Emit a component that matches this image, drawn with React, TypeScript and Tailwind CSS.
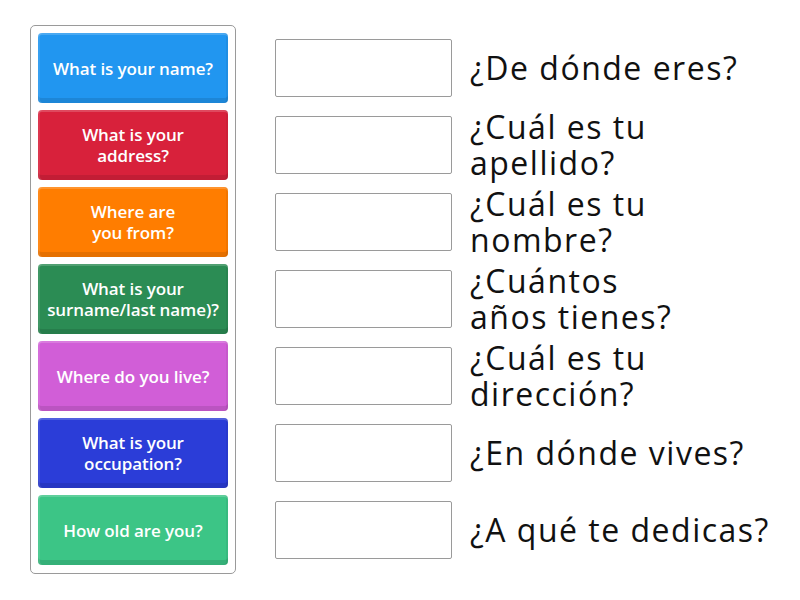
const tiles = [
  { label: ['What is your name?'], bg: 'bg-[#2196f0]' },
  { label: ['What is your', 'address?'], bg: 'bg-[#d8213b]' },
  { label: ['Where are', 'you from?'], bg: 'bg-[#ff7d00]' },
  { label: ['What is your', 'surname/last name)?'], bg: 'bg-[#2b8c54]' },
  { label: ['Where do you live?'], bg: 'bg-[#d15ed7]' },
  { label: ['What is your', 'occupation?'], bg: 'bg-[#2b3dd8]' },
  { label: ['How old are you?'], bg: 'bg-[#3cc586]' },
]

const answers = [
  ['¿De dónde eres?'],
  ['¿Cuál es tu', 'apellido?'],
  ['¿Cuál es tu', 'nombre?'],
  ['¿Cuántos', 'años tienes?'],
  ['¿Cuál es tu', 'dirección?'],
  ['¿En dónde vives?'],
  ['¿A qué te dedicas?'],
]

export default function App() {
  return (
    <div className="w-[800px] h-[600px] bg-white flex items-start pl-[30px] pt-[25px] font-['Open_Sans',sans-serif]">
      <div className="w-[206px] border border-[#9a9a9a] rounded-[5px] p-[7px] pb-[8px] flex flex-col gap-[7px]">
        {tiles.map((t, i) => (
          <div
            key={i}
            className={`${t.bg} h-[70px] rounded-[4px] flex flex-col items-center justify-center text-white text-[17px] font-semibold leading-[21px] tracking-[-0.1px] text-center shadow-[inset_0_2px_0_rgba(255,255,255,0.18),inset_2px_0_0_rgba(255,255,255,0.1),inset_-2px_0_0_rgba(0,0,0,0.05),inset_0_-5px_0_rgba(0,0,0,0.1)]`}
          >
            {t.label.map((l, j) => (
              <span key={j}>{l}</span>
            ))}
          </div>
        ))}
      </div>
      <div className="flex flex-col gap-[19px] ml-[39px] mt-[14px]">
        {answers.map((a, i) => (
          <div key={i} className="flex items-center h-[58px]">
            <div className="w-[177px] h-[58px] border border-[#9a9a9a] rounded-[2px] bg-white shrink-0" />
            <div className="ml-[18px] text-[32px] leading-[36px] tracking-[1.5px] text-[#111] whitespace-nowrap">
              {a.map((l, j) => (
                <div key={j}>{l}</div>
              ))}
            </div>
          </div>
        ))}
      </div>
    </div>
  )
}
